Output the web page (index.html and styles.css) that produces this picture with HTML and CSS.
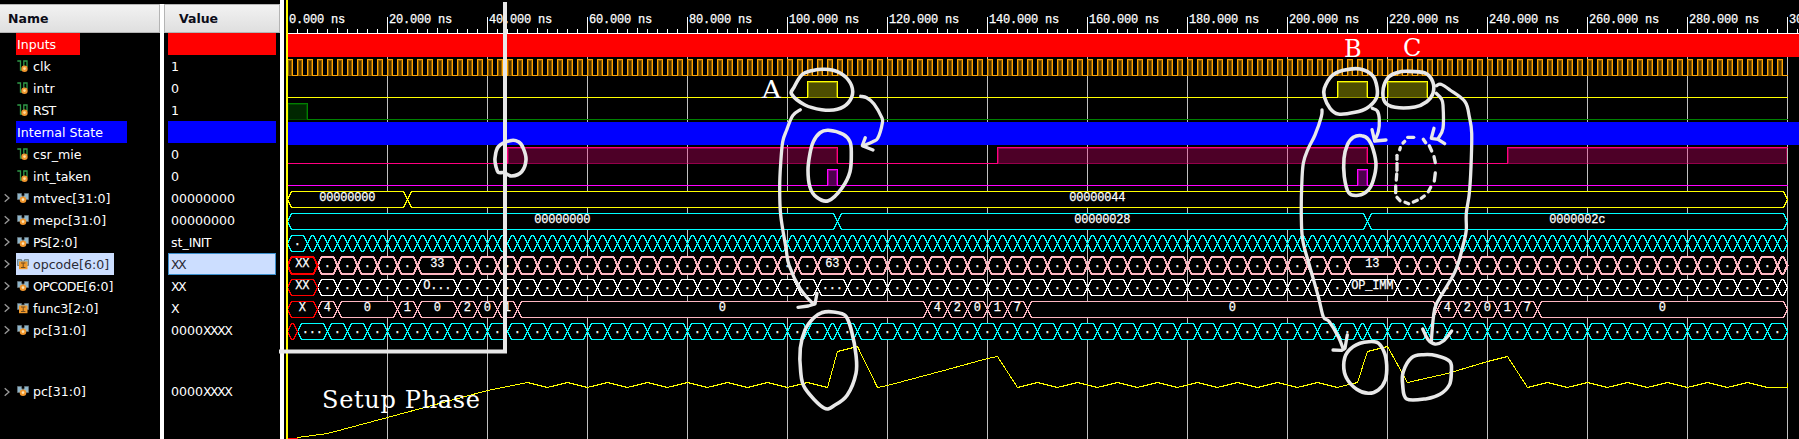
FILE: index.html
```html
<!DOCTYPE html>
<html lang="en">
<head>
<meta charset="utf-8">
<title>Waveform viewer</title>
<link rel="stylesheet" href="styles.css">
</head>
<body>
<svg class="defs" aria-hidden="true">
  <symbol id="i-sig" viewBox="0 0 12 13">
    <path d="M.3 1H3.5V10.2H6.8V1H10V7" fill="none" stroke="#2f9a48" stroke-width="1.3"/>
    <circle cx="7.5" cy="8.7" r="3.2" fill="#f0962e"/><circle cx="7.5" cy="8.6" r="1.3" fill="#ffdf9e"/>
  </symbol>
  <symbol id="i-bus" viewBox="0 0 12 13">
    <path d="M.5 1.5H4.5V3L6 5L7.5 3V1.5H11.5V7.5H.5Z" fill="#8db5ca" stroke="#66747c" stroke-width=".8"/>
    <circle cx="6" cy="7.7" r="3.3" fill="#f0962e"/><circle cx="6" cy="7.6" r="1.3" fill="#ffe6b4"/>
  </symbol>
  <symbol id="i-ibus" viewBox="0 0 12 13">
    <path d="M.5 1.5H4.5V3H7.5V1.5H11.5V7.5H.5Z" fill="#8db5ca" stroke="#66747c" stroke-width=".8"/>
    <rect x="2" y="3.5" width="8.5" height="7.7" fill="#f09a2c"/>
    <path d="M4 5H8.4M4 9.5H8.4M6.2 5V9.5" stroke="#704a20" stroke-width="1"/>
  </symbol>
</svg>
<main class="viewer">
  <section class="col names">
    <div class="head">Name</div>
    <div id="names"></div>
  </section>
  <div class="split"></div>
  <section class="col values">
    <div class="head">Value</div>
    <div id="values"></div>
  </section>
  <div class="split full"></div>
  <svg id="wave" class="wave" width="1515" height="439" viewBox="284 0 1515 439"></svg>
  <svg id="notes" class="notes" width="1799" height="439" viewBox="0 0 1799 439"></svg>
</main>
<script src="wave.js"></script>
</body>
</html>
```
FILE: styles.css
```css
body { margin: 0; background: #000; overflow: hidden; font-family: "DejaVu Sans", sans-serif; }
.defs { position: absolute; width: 0; height: 0; }
.viewer { position: relative; display: grid; grid-template-columns: 160px 4px 116px 4px 1515px; height: 439px; background: #000; }
.col { padding-top: 4px; overflow: hidden; }
.head { box-sizing: border-box; height: 29px; padding: 0 0 1px 8px; display: flex; align-items: center; background: linear-gradient(#f2f2f2, #dfdfdf); border: 1px solid #b4b4b4; border-left: 0; font-size: 12.5px; font-weight: bold; color: #0c0c18; }
.values .head { padding-left: 14px; border-left: 1px solid #b4b4b4; }
.split { background: #fff; margin-top: 4px; }
.split.full { margin-top: 0; }
.row { height: 22px; display: flex; align-items: center; font-size: 12.6px; color: #fff; white-space: pre; }
.row.tall { height: 101px; }
.chev { width: 16px; height: 22px; flex: none; fill: none; stroke: #9a9a9a; stroke-width: 1.3; }
.cell { box-sizing: border-box; height: 22px; display: flex; align-items: center; padding-right: 5px; }
.icon { width: 12px; height: 13px; margin: 0 4px 0 1px; flex: none; }
.caps { letter-spacing: -.6px; }
.unknown { letter-spacing: -1.6px; }
.red { background: #f00; width: 64px; padding-left: 1px; }
.blue { background: #00f; width: 111px; padding-left: 1px; }
.sel { background: #ccdeff; color: #2b2b35; }
.values .cell { width: 108px; margin-left: 4px; padding-left: 3px; }
.values .sel { border: 1px solid #3c8fcd; padding-left: 2px; }
.wave { display: block; }
.wave .crisp { shape-rendering: crispEdges; }
.wave text { font: 12px "Liberation Mono", monospace; letter-spacing: -.2px; fill: #fff; stroke: #fff; stroke-width: .25; }
.notes { position: absolute; left: 0; top: 0; pointer-events: none; }
.notes path { fill: none; stroke: #e8e8e8; stroke-width: 3.3; stroke-linecap: round; stroke-linejoin: round; }
.notes .loop { stroke-width: 3.6; }
.notes .frame { stroke-width: 4; stroke-linecap: butt; stroke-linejoin: miter; }
.notes text { font: 24px "DejaVu Serif", serif; fill: #fff; }
```
FILE: wave.js
```javascript
const signals = [
  ['Inputs', '', 'red'], ['clk', '1', 'sig'], ['intr', '0', 'sig'], ['RST', '1', 'sig'],
  ['Internal State', '', 'blue'], ['csr_mie', '0', 'sig'], ['int_taken', '0', 'sig'],
  ['mtvec[31:0]', '00000000', 'bus'], ['mepc[31:0]', '00000000', 'bus'], ['PS[2:0]', 'st_INIT', 'bus'],
  ['opcode[6:0]', 'XX', 'ibus', 'sel'], ['OPCODE[6:0]', 'XX', 'bus'], ['func3[2:0]', 'X', 'ibus'],
  ['pc[31:0]', '0000XXXX', 'bus'], ['pc[31:0]', '0000XXXX', 'bus', '', 'tall']
];
let names = '', values = '';
const tighten = s => s
  .replace(/OPCODE|RST|PS|INIT/g, '<span class="caps">$&</span>')
  .replace(/X+/g, '<span class="unknown">$&</span>');
for (const [name, value, kind, sel = '', tall = ''] of signals) {
  const group = kind === 'red' || kind === 'blue';
  const chev = kind.endsWith('bus') ? '<path d="M4.7 7.2L9 11L4.7 14.8"/>' : '';
  const icon = group ? '' : `<svg class="icon"><use href="#i-${kind}"/></svg>`;
  names += `<div class="row ${tall}"><svg class="chev">${chev}</svg><div class="cell ${group ? kind : ''} ${sel}">${icon}${tighten(name)}</div></div>`;
  values += `<div class="row ${tall}"><div class="cell ${group ? kind : ''} ${sel}">${tighten(value)}</div></div>`;
}
document.getElementById('names').innerHTML = names;
document.getElementById('values').innerHTML = values;

const X = t => 287 + 5 * t;
let out = '', labels = '';
const rect = (x, y, w, h, c, extra = '') => { out += `<rect x="${x}" y="${y}" width="${w}" height="${h}" fill="${c}" ${extra}/>`; };
const label = (x, y, s, anchor = 'middle') => { labels += `<text x="${x}" y="${y}" text-anchor="${anchor}">${s}</text>`; };

// grid and ruler
for (let t = 20; t <= 300; t += 20) rect(X(t), 34, 1, 405, '#c0c0c0');
rect(287, 33, 1512, 1, '#fff');
for (let t = 2; t <= 302; t += 2) {
  const top = t % 20 === 0 ? 17 : t % 10 === 0 ? 28 : 29;
  rect(X(t), top, 1, 33 - top, '#fff');
}
for (let t = 0; t <= 300; t += 20) label(X(t) + 2, 23, t + '.000 ns', 'start');
rect(287, 34, 1512, 23, '#f00');
rect(287, 122, 1512, 23, '#00f');

// one-bit signals
function digital(top, color, highs) {
  const low = top + 16;
  let d = `M287.5 ${low + .5}`, last = 0;
  for (const [a, b] of highs) {
    const x0 = X(a), x1 = X(b), w = x1 - x0;
    rect(x0, top, w, 17, color, 'fill-opacity=".3"');
    out += `<rect x="${x0 + 1.5}" y="${top + 1.5}" width="${w - 2}" height="15" fill="none" stroke="${color}" stroke-opacity=".4"/>`;
    if (a > 0) d += `H${x0 + .5}V${top + .5}`; else d = `M287.5 ${top + .5}`;
    d += `H${x1 + .5}`;
    d += b < 300 ? `V${low + .5}` : '';
    last = b;
  }
  if (last !== 300) d += 'H1787.5';
  out += `<path d="${d}" fill="none" stroke="${color}"/>`;
}
const clk = [];
for (let t = 0; t < 300; t += 2) clk.push([t, t + 1]);
digital(59, '#ffa500', clk);
digital(81, '#ff0', [[104, 110], [210, 216], [220, 228]]);
digital(103, '#008000', [[0, 4]]);
digital(147, '#ff0080', [[44, 110], [142, 216], [244, 300]]);
digital(169, '#f0f', [[108, 110], [214, 216]]);

// bus signals: edges are transition times, texts are keyed by start time
function bus(top, color, edges, texts, bold = false, redUntil = -1) {
  for (let pass = 0; pass < 2; pass++) for (let i = 0; i < edges.length - 1; i++) {
    const isRed = edges[i + 1] <= redUntil;
    if (isRed !== (pass === 1)) continue;
    const a = X(edges[i]) + .5, b = X(edges[i + 1]) + .5, y0 = top + (bold ? 0 : .5), y1 = y0 + (bold ? 17 : 16), m = top + 8.5;
    out += `<path d="M${a} ${m}L${a + 4} ${y0}H${b - 4}L${b} ${m}L${b - 4} ${y1}H${a + 4}Z" fill="#000" stroke="${isRed ? '#f00' : color}" stroke-width="${bold ? 2 : 1}"/>`;
    const s = texts[edges[i]] ?? (edges[i + 1] - edges[i] >= 4 ? '.' : '');
    if (s) label((a + b) / 2 - .2, top + 10, s);
  }
}
const steps = (a, b, n) => { const r = []; for (let t = a; t <= b; t += n) r.push(t); return r; };
bus(191, '#ff0', [0, 24, 300], { 0: '00000000', 24: '00000044' });
bus(213, '#0ff', [0, 110, 216, 300], { 0: '00000000', 110: '00000028', 216: '0000002c' });
bus(235, '#0ff', [0, ...steps(4, 300, 2)], {});
const op = [0, ...steps(6, 26, 4), ...steps(34, 106, 4), ...steps(112, 212, 4), ...steps(222, 298, 4), 300];
bus(257, '#ffb6c1', op, { 0: 'XX', 26: '33', 106: '63', 212: '13' }, true, 6);
bus(279, '#fff', op, { 0: 'XX', 26: 'O...', 106: '...', 212: 'OP_IMM' }, false, 6);
bus(301, '#ffb6c1', [0, 6, 10, 22, 26, 34, 38, 42, 46, 128, 132, 136, 140, 144, 148, 230, 234, 238, 242, 246, 250, 300],
  { 0: 'X', 6: '4', 10: '0', 22: '1', 26: '0', 34: '2', 38: '0', 42: '1', 46: '0', 128: '4', 132: '2', 136: '0', 140: '1', 144: '7', 148: '0', 230: '4', 234: '2', 238: '0', 242: '1', 246: '7', 250: '0' }, false, 6);
bus(323, '#0ff', [0, 2, ...steps(8, 108, 4), ...steps(110, 214, 4), ...steps(216, 300, 4)], { 2: '...' }, false, 2);

// analog program counter
const pc = [[297, 437], [327, 433], [387, 417], [487, 390], [527, 382]];
const ripple = (from, to, high) => { for (let x = from; x <= to; x += 20) { pc.push([x, high ? 382 : 387]); high = !high; } };
ripple(547, 827, false);
pc.push([837, 351], [857, 346], [877, 387], [887, 385], [947, 369], [987, 358], [997, 356]);
ripple(1017, 1337, false);
pc.push([1357, 382], [1367, 351], [1387, 346], [1407, 382], [1447, 373], [1487, 361], [1507, 356]);
ripple(1527, 1767, false);
pc.push([1787, 387], [1787, 382]);
out += `<path d="M${pc.map(p => (p[0] + .5) + ' ' + (p[1] + .5)).join('L')}" fill="none" stroke="#ff0"/>`;
rect(287, 438, 11, 1, '#f00');
rect(286, 0, 2, 439, '#ff0');
document.getElementById('wave').innerHTML = `<g class="crisp">${out}</g>${labels}`;

// freehand notes, stored in thirds of a pixel relative to each anchor
function curve(ox, pts, closed = false, cls = '') {
  const p = pts.map(([x, y]) => [ox + x / 3, y / 3]), n = p.length;
  const at = i => closed ? p[(i + n) % n] : p[Math.max(0, Math.min(n - 1, i))];
  const f = v => v.toFixed(1);
  let d = `M${f(p[0][0])} ${f(p[0][1])}`;
  for (let i = 0; i < (closed ? n : n - 1); i++) {
    const [a, b, c, e] = [at(i - 1), at(i), at(i + 1), at(i + 2)];
    d += `C${f(b[0] + (c[0] - a[0]) / 6)} ${f(b[1] + (c[1] - a[1]) / 6)} ${f(c[0] - (e[0] - b[0]) / 6)} ${f(c[1] - (e[1] - b[1]) / 6)} ${f(c[0])} ${f(c[1])}`;
  }
  return `<path class="${cls}" d="${d}"/>`;
}
const line = (ox, pts) => `<path d="M${pts.map(([x, y]) => (ox + x / 3).toFixed(1) + ' ' + (y / 3).toFixed(1)).join('L')}"/>`;
const loop = (ox, pts) => curve(ox, pts, true, 'loop');
let n = '<path class="frame" d="M505 2V351.5H279"/>';
n += loop(280, [[655, 517], [648, 500], [645, 475], [655, 440], [690, 422], [715, 425], [730, 445], [738, 480], [725, 515], [695, 528], [672, 518]]);
n += loop(750, [[132, 262], [155, 225], [185, 212], [225, 208], [262, 215], [295, 240], [308, 275], [295, 308], [262, 328], [215, 329], [165, 315], [125, 283]]);
n += curve(750, [[332, 289], [350, 293], [372, 312], [395, 352], [397, 370], [383, 415], [368, 425], [340, 437]]);
n += line(750, [[346, 413], [337, 437], [369, 450]]);
n += loop(750, [[210, 398], [235, 391], [280, 403], [300, 425], [304, 455], [300, 515], [275, 565], [235, 602], [200, 592], [180, 562], [174, 510], [180, 460], [190, 425]]);
n += curve(750, [[151, 329], [128, 347], [110, 390], [98, 425], [92, 490], [89, 560], [92, 645], [108, 745], [117, 795], [150, 865], [190, 913]]);
n += line(750, [[144, 922], [175, 918], [195, 912], [201, 880]]);
n += loop(750, [[215, 938], [250, 936], [287, 948], [305, 995], [318, 1065], [318, 1120], [292, 1185], [255, 1215], [222, 1224], [165, 1165], [152, 1115], [151, 1045], [165, 990], [190, 955]]);
n += loop(1260, [[193, 265], [215, 228], [250, 211], [300, 207], [338, 227], [351, 262], [349, 295], [320, 325], [285, 337], [235, 342], [210, 325], [193, 290]]);
n += loop(1260, [[385, 232], [410, 218], [440, 214], [495, 219], [518, 245], [519, 280], [500, 305], [465, 321], [405, 322], [374, 305], [370, 265]]);
n += curve(1260, [[337, 325], [352, 333], [358, 360], [355, 395], [344, 422]]);
n += line(1260, [[336, 389], [344, 423], [378, 420]]);
n += loop(1260, [[262, 435], [280, 412], [305, 407], [325, 418], [340, 450], [348, 495], [340, 540], [325, 570], [295, 586], [266, 578], [253, 530], [252, 475]]);
n += curve(1260, [[529, 280], [543, 295], [549, 315], [549, 385], [534, 416]]);
n += line(1260, [[522, 385], [514, 415], [534, 418], [554, 431]]);
n += curve(1260, [[529, 257], [543, 253], [570, 270], [615, 305], [628, 350], [635, 400], [633, 500], [628, 580], [619, 640], [619, 690], [612, 725], [585, 815], [530, 910], [520, 955], [514, 1023]]);
n += curve(1260, [[488, 987], [505, 1020], [525, 1032], [550, 1023], [575, 993]]);
n += curve(1260, [[186, 330], [184, 350], [165, 405], [145, 445], [130, 490], [125, 560], [124, 645], [128, 720], [148, 795], [175, 890], [190, 950], [208, 965], [235, 1010], [250, 1048]]);
n += line(1260, [[219, 1050], [245, 1051], [255, 1045], [262, 1005]]);
n += loop(1260, [[300, 1030], [350, 1027], [372, 1055], [380, 1095], [376, 1140], [355, 1170], [325, 1180], [290, 1168], [260, 1135], [251, 1095], [262, 1057]]);
n += loop(1260, [[455, 1073], [490, 1064], [530, 1067], [570, 1085], [574, 1120], [568, 1155], [540, 1183], [500, 1196], [440, 1197], [428, 1155], [430, 1115]]);
const dashes = [[443, 412, 461, 412], [490, 418, 497, 428], [508, 437, 515, 453], [522, 470, 526, 488], [526, 519, 523, 543], [512, 562, 505, 575], [493, 588, 484, 595], [472, 601, 460, 606], [446, 611, 435, 607], [420, 602, 411, 592], [407, 578, 407, 558], [409, 540, 410, 522], [411, 511, 411, 490], [411, 478, 411, 466], [419, 449, 421, 443], [429, 429, 434, 424]];
for (const [a, b, c, d] of dashes) n += line(1260, [[a, b], [c, d]]);
n += '<text x="322" y="408" textLength="158">Setup Phase</text><text x="762" y="97.5" textLength="19" lengthAdjust="spacingAndGlyphs">A</text><text x="1344" y="57">B</text><text x="1403" y="56">C</text>';
document.getElementById('notes').innerHTML = n;
```
